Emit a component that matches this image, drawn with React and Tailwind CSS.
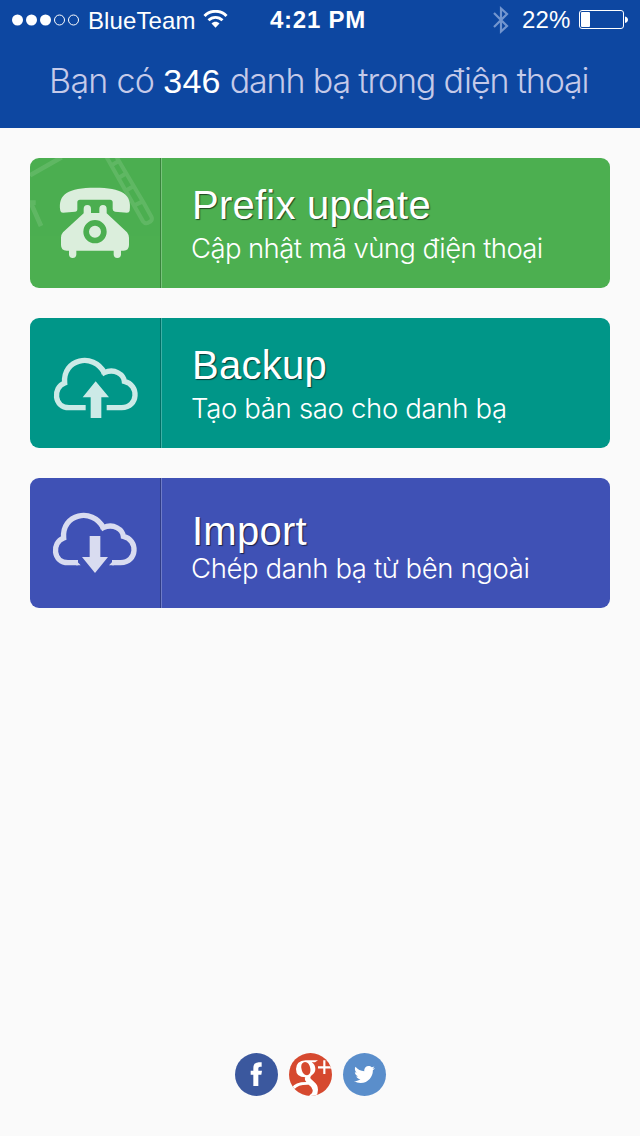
import React from "react";
import { FaTwitter } from "react-icons/fa";

const SANS = "font-['Liberation_Sans',Arial,sans-serif]";
const LIGHT = "font-['Inter','Liberation_Sans',sans-serif] font-light";

function StatusBar() {
  return (
    <div className={`flex h-10 items-center text-white ${SANS}`}>
      <svg className="ml-3 shrink-0" width="68" height="12" viewBox="0 0 68 12">
        <circle cx="5.5" cy="6" r="5.5" fill="#fff" />
        <circle cx="19.5" cy="6" r="5.5" fill="#fff" />
        <circle cx="33.5" cy="6" r="5.5" fill="#fff" />
        <circle cx="47.5" cy="6" r="5" fill="none" stroke="#fff" />
        <circle cx="61.5" cy="6" r="5" fill="none" stroke="#fff" />
      </svg>
      <span className="ml-2 mt-0.5 w-[115px] whitespace-nowrap text-[24px] leading-8 tracking-[0.1px]">BlueTeam</span>
      <svg className="-mt-0.5 shrink-0" width="25" height="18" viewBox="0 0 24 18">
        <path d="M1 6C7-.2 17-.2 23 6" fill="none" stroke="#fff" strokeWidth="3" />
        <path d="M5 10.3c4-4 10-4 14 0" fill="none" stroke="#fff" strokeWidth="2.8" />
        <path d="M8 13.5c2.2-2.3 5.8-2.3 8 0L12 17.8z" fill="#fff" />
      </svg>
      <span className="ml-[42px] w-[100px] whitespace-nowrap text-[24px] font-bold leading-8 tracking-[0.75px]">4:21 PM</span>
      <svg className="ml-[123px] shrink-0" width="16" height="28" viewBox="0 0 16 28">
        <path d="M1 7l13 13-6 5.5v-23L14 8 1 21" fill="none" stroke="#7396cf" strokeWidth="2.2" />
      </svg>
      <span className="ml-[13px] w-[57px] whitespace-nowrap text-[24px] leading-8 tracking-[0.2px]">22%</span>
      <svg className="shrink-0" width="50" height="20" viewBox="0 0 50 20">
        <rect x="0.5" y="0.5" width="44" height="18" rx="2.5" fill="none" stroke="#fff" />
        <rect x="2" y="2" width="9" height="15" rx="1" fill="#fff" />
        <path d="M46 6.500c4 1 4 5.500 0 6.500z" fill="#fff" />
      </svg>
    </div>
  );
}

function PhoneIcon() {
  return (
    <svg className="h-full w-full" viewBox="15 24 390 390">
      <g fill="none" stroke="#fff" opacity="0.11" strokeWidth="14">
        <path d="M15 76L110 22" />
        <path d="M10 158h22M18 160l30 68" />
        <path d="M244 20L354 214q6 8 14 5l9-5q6-5 2-14L358 162 274 20M262 44l18-10M284 82l20-12M306 120l20-12M328 166l30-14" strokeWidth="12" />
      </g>
      <g fill="#dbeedc">
        <path d="M106 182C98 132 130 113 210 113s112 19 104 69q-1 6-8 6l-36-3q-7-1-7-8v-20q0-8-8-8h-90q-8 0-8 8v20q0 8-7 8l-36 3q-7 0-8-6z" />
        <path fillRule="evenodd" d="M176 190v-13q0-12 11-12t11 12v12h25v-12q0-12 11-12t11 12v13L306 247q6 8 6 16v22q0 17-16 17h-8v11q0 11-11 11t-11-11v-11H154v11q0 11-11 11t-11-11v-11h-7q-17 0-17-17v-22q0-9 6-16zM210 210a35 35 0 1 0 0 70 35 35 0 0 0 0-70zm0 17a18 18 0 1 1 0 36 18 18 0 0 1 0-36z" />
      </g>
    </svg>
  );
}

function UploadIcon() {
  return (
    <svg className="h-full w-full" viewBox="15 24 390 390">
      <path d="M182 293h-50C87 293 82 233 119 219 112 147 205 126 238 188c31-14 58 6 60 26 45 9 43 79-8 79h-45" fill="none" stroke="#cceae7" strokeWidth="16" />
      <path d="M231 196q-3-13-9-19l18 4q-8 6-9 15" fill="#cceae7" />
      <path d="M212 214l40 48h-23v62h-32v-62h-24z" fill="#cceae7" />
    </svg>
  );
}

function DownloadIcon() {
  return (
    <svg className="h-full w-full" viewBox="15 24 390 390">
      <path d="M159 278h-30C84 278 79 218 116 204 109 132 202 111 235 173c31-14 58 6 60 26 45 9 43 79-8 79h-26" fill="none" stroke="#d9dcf0" strokeWidth="16" />
      <path d="M228 181q-3-13-9-19l18 4q-8 6-9 15M152 270l15 16h-14zM267 270l-15 16h15z" fill="#d9dcf0" />
      <path d="M194 198h32v63h23l-39 48-39-48h23z" fill="#d9dcf0" />
    </svg>
  );
}

function ActionCard({ tone, icon, title, titleClass, subtitle, subtitleClass }) {
  return (
    <button className={`flex h-[130px] w-full overflow-hidden rounded-[9px] text-left text-white ${tone}`}>
      <span className="block h-full w-[130px] shrink-0">{icon}</span>
      <span className="h-full w-px shrink-0 bg-black/25" />
      <span className="h-full w-px shrink-0 bg-white/25" />
      <span className="flex flex-col pl-[29px]">
        <span className={`ml-px block whitespace-nowrap text-[40px] leading-[46px] tracking-[0.25px] [text-shadow:1px_1px_1px_rgba(0,0,0,0.6)] ${SANS} ${titleClass}`}>{title}</span>
        <span className={`block whitespace-nowrap text-[27.5px] leading-[34px] ${LIGHT} ${subtitleClass}`}>{subtitle}</span>
      </span>
    </button>
  );
}

function FacebookIcon() {
  return (
    <svg className="h-[43px] w-[43px]" viewBox="30 39 129 129">
      <circle cx="94.500" cy="103.500" r="64.500" fill="#3b589e" />
      <path d="M85 138v-34h-8V92h8v-7q0-18 16-18h9v13h-5q-5 0-5 5v7h11l-2 12h-9v34z" fill="#fff" />
    </svg>
  );
}

function GooglePlusIcon() {
  return (
    <svg className="h-[43px] w-[43px]" viewBox="192 39 129 129">
      <clipPath id="disc"><circle cx="256.500" cy="103.500" r="64.500" /></clipPath>
      <circle cx="256.500" cy="103.500" r="64.500" fill="#d6492f" />
      <g clipPath="url(#disc)" fill="none" stroke="#fff">
        <path fill="#fff" stroke="none" fillRule="evenodd" d="M242 61h37l-9 6h-10q11 7 11 20 0 12-11 19-7 6-2 11l9 8q12 9 12 24 0 24-24 24l-2-7q11-5 10-16-1-9-12-16-32-1-42 13l-8-4q8-17 43-17-7-7-3-14-28 0-28-25 0-24 29-26zM240 66q-13 2-11 18 3 22 17 22 12-2 10-20-3-19-16-20z" />
        <path d="M298 61v41M279 82h41" strokeWidth="6.500" />
      </g>
    </svg>
  );
}

function SocialLinks() {
  return (
    <div className="flex gap-[11px] pl-[235px]">
      <FacebookIcon />
      <GooglePlusIcon />
      <span className="flex h-[43px] w-[43px] items-center justify-center rounded-full bg-[#5a8ecb] text-white">
        <FaTwitter className="h-[21px] w-[21px]" />
      </span>
    </div>
  );
}

export default function App() {
  return (
    <div className="flex h-[1136px] w-[640px] flex-col overflow-hidden bg-[#fafafa]">
      <header className="h-32 bg-[#0d47a1]">
        <StatusBar />
        <h1 className={`ml-[49px] mt-[18px] flex whitespace-nowrap text-[34px] leading-[46px] text-[#c5cae9] ${LIGHT}`}>
          <span className="tracking-[-0.7px]">Bạn có</span>
          <span className={`ml-[9px] mr-[9px] font-normal tracking-[0.2px] text-white ${SANS}`}>346</span>
          <span className="tracking-[-1.13px]">danh bạ trong điện thoại</span>
        </h1>
      </header>
      <main className="flex flex-1 flex-col gap-[30px] px-[30px] pt-[30px]">
        <ActionCard tone="bg-[#4caf50]" icon={<PhoneIcon />} title="Prefix update" titleClass="mt-6" subtitle="Cập nhật mã vùng điện thoại" subtitleClass="mt-[3px] tracking-[-0.6px]" />
        <ActionCard tone="bg-[#009688]" icon={<UploadIcon />} title="Backup" titleClass="mt-6" subtitle="Tạo bản sao cho danh bạ" subtitleClass="mt-[3px] tracking-[-0.32px]" />
        <ActionCard tone="bg-[#3f51b5]" icon={<DownloadIcon />} title="Import" titleClass="mt-[30px]" subtitle="Chép danh bạ từ bên ngoài" subtitleClass="-mt-[3px] tracking-[-0.38px]" />
      </main>
      <footer className="h-[83px]">
        <SocialLinks />
      </footer>
    </div>
  );
}
